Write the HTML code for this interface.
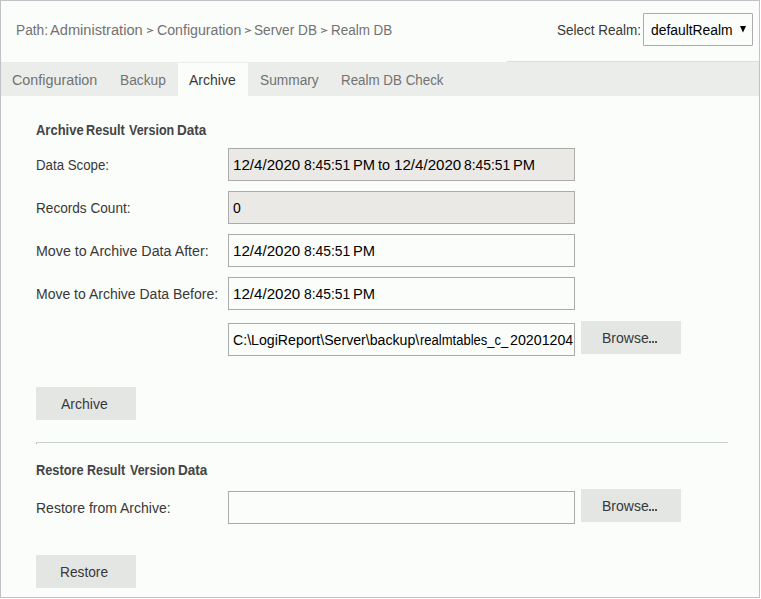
<!DOCTYPE html>
<html><head><meta charset="utf-8">
<style>
html,body{margin:0;padding:0;width:761px;height:599px;overflow:hidden;background:#ffffff;}
body{position:relative;font-family:"Liberation Sans",sans-serif;font-size:14px;}
.frame{position:absolute;left:0;top:0;width:758px;height:596px;border:1px solid #c2c1c5;background:#fbfdfb;}
.t{position:absolute;white-space:pre;line-height:16px;transform-origin:0 0;}
.tabbar{position:absolute;left:1px;top:62px;width:758px;height:34px;background:#ebedeb;}
.tabline{position:absolute;left:507px;top:61px;width:252px;height:1px;background:#dcdddc;}
.tabact{position:absolute;left:178px;top:63px;width:70px;height:33px;background:#fbfdfb;}
.inp{position:absolute;box-sizing:border-box;height:33px;width:347px;left:228px;border:1px solid #ababab;background:#fbfdfb;}
.dis{background:#ebe9e6;}
.btn{position:absolute;box-sizing:border-box;height:33px;width:100px;background:#e4e6e4;}
.sel{position:absolute;box-sizing:border-box;left:643px;top:13px;width:110px;height:33px;border:1px solid #ababab;border-radius:1px;background:#fbfdfb;}
.hr{position:absolute;left:36px;top:442px;width:692px;height:1px;background:#c9d0d0;}
.g{color:#727272;}
.d{color:#383838;}
.k{color:#000000;}
.b{font-weight:bold;color:#444444;}
</style></head><body>
<div class="frame"></div>
<div class="t g" style="left:16px;top:22px;transform:scaleX(0.98)">Path:</div>
<div class="t g" style="left:50.2px;top:22px;transform:scaleX(1.045)">Administration</div>
<svg style="position:absolute;left:146px;top:27px" width="8" height="7" viewBox="0 0 8 7"><polyline points="1,1.5 6.5,3.5 1,5.5" fill="none" stroke="#727272" stroke-width="1.15"/></svg>
<div class="t g" style="left:156.5px;top:22px;transform:scaleX(1.012)">Configuration</div>
<svg style="position:absolute;left:244px;top:27px" width="8" height="7" viewBox="0 0 8 7"><polyline points="1,1.5 6.5,3.5 1,5.5" fill="none" stroke="#727272" stroke-width="1.15"/></svg>
<div class="t g" style="left:253.8px;top:22px;transform:scaleX(0.976)">Server DB</div>
<svg style="position:absolute;left:320px;top:27px" width="8" height="7" viewBox="0 0 8 7"><polyline points="1,1.5 6.5,3.5 1,5.5" fill="none" stroke="#727272" stroke-width="1.15"/></svg>
<div class="t g" style="left:330.8px;top:22px;transform:scaleX(0.96)">Realm DB</div>
<div class="t d" style="left:556.8px;top:22px;transform:scaleX(0.965)">Select Realm:</div>
<div class="sel"></div>
<div class="t k" style="left:651px;top:22px;transform:scaleX(0.99)">defaultRealm</div>
<svg style="position:absolute;left:740px;top:26px" width="6" height="7" viewBox="0 0 6 7"><path d="M0 0H6L3 6.5Z" fill="#000"/></svg>

<div class="tabline"></div>
<div class="tabbar"></div>
<div class="tabact"></div>
<div class="t g" style="left:12px;top:72px;transform:scaleX(1.024)">Configuration</div>
<div class="t g" style="left:120px;top:72px;transform:scaleX(0.98)">Backup</div>
<div class="t d" style="left:189px;top:72px;">Archive</div>
<div class="t g" style="left:260px;top:72px;transform:scaleX(0.98)">Summary</div>
<div class="t g" style="left:341px;top:72px;transform:scaleX(0.955)">Realm DB Check</div>

<div class="t d b" style="left:35.9px;top:122px;transform:scaleX(0.927)">Archive</div>
<div class="t d b" style="left:85.8px;top:122px;transform:scaleX(0.905)">Result</div>
<div class="t d b" style="left:129.2px;top:122px;transform:scaleX(0.894)">Version</div>
<div class="t d b" style="left:177.2px;top:122px;transform:scaleX(0.966)">Data</div>

<div class="t d" style="left:36px;top:157px;transform:scaleX(0.947)">Data Scope:</div>
<div class="inp dis" style="top:148px;"></div>
<div class="t k" style="left:232.9px;top:157px;transform:scaleX(1.08)">12/4/2020</div><div class="t k" style="left:303.6px;top:157px;transform:scaleX(0.99)">8:45:51</div><div class="t k" style="left:353px;top:157px;transform:scaleX(1.05)">PM</div><div class="t k" style="left:378.2px;top:157px;transform:scaleX(1.03)">to</div><div class="t k" style="left:393.6px;top:157px;transform:scaleX(1.08)">12/4/2020</div><div class="t k" style="left:464.1px;top:157px;transform:scaleX(0.99)">8:45:51</div><div class="t k" style="left:512.5px;top:157px;transform:scaleX(1.05)">PM</div>

<div class="t d" style="left:36px;top:200px;transform:scaleX(0.972)">Records Count:</div>
<div class="inp dis" style="top:191px;"></div>
<div class="t k" style="left:233px;top:200px;">0</div>

<div class="t d" style="left:36px;top:243px;transform:scaleX(1.018)">Move to Archive Data After:</div>
<div class="inp" style="top:234px;"></div>
<div class="t k" style="left:232.9px;top:243px;transform:scaleX(1.08)">12/4/2020</div><div class="t k" style="left:303.6px;top:243px;transform:scaleX(0.99)">8:45:51</div><div class="t k" style="left:353px;top:243px;transform:scaleX(1.05)">PM</div>

<div class="t d" style="left:36px;top:286px;">Move to Archive Data Before:</div>
<div class="inp" style="top:277px;"></div>
<div class="t k" style="left:232.9px;top:286px;transform:scaleX(1.08)">12/4/2020</div><div class="t k" style="left:303.6px;top:286px;transform:scaleX(0.99)">8:45:51</div><div class="t k" style="left:353px;top:286px;transform:scaleX(1.05)">PM</div>

<div class="inp" style="top:323px;overflow:hidden;"><div class="t k" style="left:4px;top:8px;transform:scaleX(1.01)">C:\LogiReport\Server\backup\</div><div class="t k" style="left:190.6px;top:8px;transform:scaleX(0.93)">realmtables_c_</div><div class="t k" style="left:281.2px;top:8px;transform:scaleX(1.016)">20201204</div></div>
<div class="btn" style="left:581px;top:321px;"></div>
<div class="t d" style="left:602px;top:330px;">Browse</div><div style="position:absolute;left:649px;top:341px;width:2px;height:2px;background:#555"></div><div style="position:absolute;left:652px;top:341px;width:2px;height:2px;background:#555"></div><div style="position:absolute;left:655px;top:341px;width:2px;height:2px;background:#555"></div>

<div class="btn" style="left:36px;top:387px;"></div>
<div class="t d" style="left:61px;top:396px;">Archive</div>

<div class="hr"></div><div style="position:absolute;left:36px;top:443px;width:1px;height:1px;background:#a8a8a8"></div>

<div class="t d b" style="left:35.9px;top:462px;transform:scaleX(0.914)">Restore</div>
<div class="t d b" style="left:86.6px;top:462px;transform:scaleX(0.89)">Result</div>
<div class="t d b" style="left:129.6px;top:462px;transform:scaleX(0.892)">Version</div>
<div class="t d b" style="left:177.6px;top:462px;transform:scaleX(0.966)">Data</div>
<div class="t d" style="left:36px;top:500px;">Restore from Archive:</div>
<div class="inp" style="top:491px;"></div>
<div class="btn" style="left:581px;top:489px;"></div>
<div class="t d" style="left:602px;top:498px;">Browse</div><div style="position:absolute;left:649px;top:509px;width:2px;height:2px;background:#555"></div><div style="position:absolute;left:652px;top:509px;width:2px;height:2px;background:#555"></div><div style="position:absolute;left:655px;top:509px;width:2px;height:2px;background:#555"></div>

<div class="btn" style="left:36px;top:555px;"></div>
<div class="t d" style="left:60px;top:564px;transform:scaleX(0.98)">Restore</div>
</body></html>
